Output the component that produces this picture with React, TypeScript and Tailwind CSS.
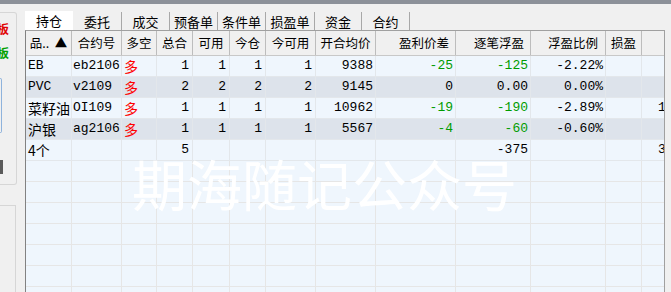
import React from 'react';

const cjk = { fontFamily: '"Noto Sans CJK SC", "Noto Sans", sans-serif' };
const mono = { fontFamily: '"Liberation Mono", "Noto Sans CJK SC", monospace' };

type Col = { w: string; label: string; head: string; align: string };

const cols: Col[] = [
  { w: 'w-[46px]', label: '品..\u00a0\u00a0▲', head: 'justify-center', align: 'justify-start pl-[2px]' },
  { w: 'w-[50px]', label: '合约号', head: 'justify-center', align: 'justify-start pl-[1px]' },
  { w: 'w-[35px]', label: '多空', head: 'justify-center', align: 'justify-start pl-[2px]' },
  { w: 'w-[36px]', label: '总合', head: 'justify-center', align: 'justify-end pr-[3px]' },
  { w: 'w-[37px]', label: '可用', head: 'justify-center', align: 'justify-end pr-[3px]' },
  { w: 'w-[36px]', label: '今仓', head: 'justify-center', align: 'justify-end pr-[3px]' },
  { w: 'w-[50px]', label: '今可用', head: 'justify-center', align: 'justify-end pr-[3px]' },
  { w: 'w-[60px]', label: '开合均价', head: 'justify-center', align: 'justify-end pr-[2px]' },
  { w: 'w-[80px]', label: '盈利价差', head: 'justify-end pr-[6px]', align: 'justify-end pr-[2px]' },
  { w: 'w-[75px]', label: '逐笔浮盈', head: 'justify-end pr-[6px]', align: 'justify-end pr-[2px]' },
  { w: 'w-[75px]', label: '浮盈比例', head: 'justify-end pr-[7px]', align: 'justify-end pr-[2px]' },
  { w: 'w-[36px]', label: '损盈', head: 'justify-center', align: 'justify-end pr-[2px]' },
  { w: 'w-[60px]', label: '', head: 'justify-center', align: 'justify-start pl-[16px]' },
];

type Cell = { t: string; c?: string; zh?: boolean };

const rows: Cell[][] = [
  [{ t: 'EB' }, { t: 'eb2106' }, { t: '多', c: 'text-[#ff0000]', zh: true }, { t: '1' }, { t: '1' }, { t: '1' }, { t: '1' }, { t: '9388' }, { t: '-25', c: 'text-[#009c00]' }, { t: '-125', c: 'text-[#009c00]' }, { t: '-2.22%' }, { t: '' }, { t: '' }],
  [{ t: 'PVC' }, { t: 'v2109' }, { t: '多', c: 'text-[#ff0000]', zh: true }, { t: '2' }, { t: '2' }, { t: '2' }, { t: '2' }, { t: '9145' }, { t: '0' }, { t: '0.00' }, { t: '0.00%' }, { t: '' }, { t: '' }],
  [{ t: '菜籽油', zh: true }, { t: 'OI109' }, { t: '多', c: 'text-[#ff0000]', zh: true }, { t: '1' }, { t: '1' }, { t: '1' }, { t: '1' }, { t: '10962' }, { t: '-19', c: 'text-[#009c00]' }, { t: '-190', c: 'text-[#009c00]' }, { t: '-2.89%' }, { t: '' }, { t: '1096' }],
  [{ t: '沪银', zh: true }, { t: 'ag2106' }, { t: '多', c: 'text-[#ff0000]', zh: true }, { t: '1' }, { t: '1' }, { t: '1' }, { t: '1' }, { t: '5567' }, { t: '-4', c: 'text-[#009c00]' }, { t: '-60', c: 'text-[#009c00]' }, { t: '-0.60%' }, { t: '' }, { t: '' }],
  [{ t: '4个', zh: true }, { t: '' }, { t: '' }, { t: '5' }, { t: '' }, { t: '' }, { t: '' }, { t: '' }, { t: '' }, { t: '-375' }, { t: '' }, { t: '' }, { t: '3120' }],
];

const tabs = [
  { name: '持仓', w: 'w-[48px]' },
  { name: '委托', w: 'w-[49px]' },
  { name: '成交', w: 'w-[48px]' },
  { name: '预备单', w: 'w-[48px]' },
  { name: '条件单', w: 'w-[48px]' },
  { name: '损盈单', w: 'w-[49px]' },
  { name: '资金', w: 'w-[47px]' },
  { name: '合约', w: 'w-[48px]' },
];

function SidePanel() {
  return (
    <div className="w-[25px] shrink-0 flex flex-col">
      <div className="mt-[8px] h-[173px] w-[17px] border border-l-0 border-[#d6d6d6] rounded-r-[3px] flex flex-col overflow-hidden" style={cjk}>
        <div className="mt-[8px] -ml-[3px] text-[12px] leading-[16px] font-bold text-[#e00000]">板</div>
        <div className="mt-[8px] -ml-[3px] text-[12px] leading-[16px] font-bold text-[#00a000]">板</div>
        <div className="mt-[17px] h-[55px] w-[2px] border-r border-y border-[#8fb3dc] rounded-r-[2px]" />
        <div className="mt-[27px] h-[14px] w-[3px] bg-[#5a5a5a]" />
      </div>
      <div className="mt-[20px] flex-1 w-[16px] border-t border-r border-[#d6d6d6]" />
    </div>
  );
}

export default function App() {
  const empty = Array.from({ length: 7 });
  return (
    <div className="relative w-[671px] h-[292px] bg-[#f0f0f0] overflow-hidden">
      <div className="h-[4px] bg-[#8c9199]" />
      <div className="flex h-[288px]">
        <SidePanel />
        <div className="flex flex-col w-[640px]">
          {/* tabs */}
          <div className="mt-[7px] h-[19px] flex" style={cjk}>
            {tabs.map((tab, i) => (
              <div
                key={tab.name}
                className={`${tab.w} h-full flex items-center justify-center text-[13px] text-black ${
                  i === 0 ? 'bg-white' : 'border-r border-[#a8a8a8] my-[1px] h-[17px]'
                }`}
              >
                {tab.name}
              </div>
            ))}
          </div>

          {/* grid */}
          <div className="flex-1 border-l border-r border-t border-l-[#828282] border-r-[#a0a0a0] border-t-[#a0a0a0] bg-[#eff6fd] overflow-hidden">
            <div className="flex h-[25px] bg-[#f0f0f0] border-b border-[#c8c8c8] w-max" style={cjk}>
              {cols.map((col, i) => (
                <div
                  key={i}
                  className={`${col.w} shrink-0 h-full flex items-center whitespace-nowrap text-[12.5px] text-black ${col.head} ${
                    i < cols.length - 1 ? 'border-r border-[#bdbdbd]' : ''
                  }`}
                >
                  {col.label}
                </div>
              ))}
            </div>

            {rows.map((row, r) => (
              <div
                key={r}
                className={`flex h-[21px] w-max border-b border-[#e3e7eb] ${r % 2 === 1 ? 'bg-[#dde3eb]' : 'bg-[#eff6fd]'}`}
                style={mono}
              >
                {row.map((cell, i) => (
                  <div
                    key={i}
                    className={`${cols[i].w} shrink-0 h-full flex items-center whitespace-nowrap overflow-hidden border-r border-[#e3e7eb] ${cols[i].align} ${
                      cell.zh ? 'text-[14px]' : 'text-[13px]'
                    } ${cell.c ?? 'text-black'}`}
                    style={cell.zh ? cjk : undefined}
                  >
                    {cell.t}
                  </div>
                ))}
              </div>
            ))}

            {empty.map((_, r) => (
              <div key={`e${r}`} className="flex h-[21px] w-max border-b border-[#e6e6e6]">
                {cols.map((col, i) => (
                  <div key={i} className={`${col.w} shrink-0 h-full border-r border-[#e6e6e6]`} />
                ))}
              </div>
            ))}
          </div>
        </div>
      </div>

      {/* watermark */}
      <div
        className="absolute left-[132px] top-[152px] text-[55px] leading-[60px] text-white whitespace-nowrap pointer-events-none"
        style={cjk}
      >
        期海随记公众号
      </div>
    </div>
  );
}
